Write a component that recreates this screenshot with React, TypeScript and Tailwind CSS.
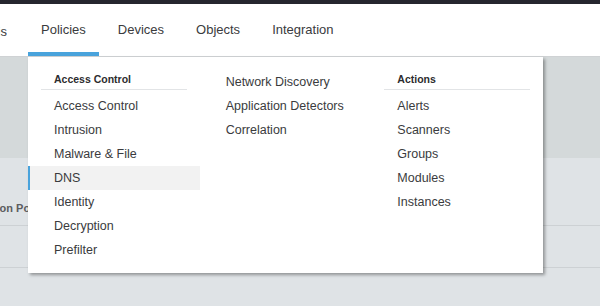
import React from 'react';

const navItems = ['Policies', 'Devices', 'Objects', 'Integration'];

const accessControl = ['Access Control', 'Intrusion', 'Malware & File', 'DNS', 'Identity', 'Decryption', 'Prefilter'];
const discovery = ['Network Discovery', 'Application Detectors', 'Correlation'];
const actions = ['Alerts', 'Scanners', 'Groups', 'Modules', 'Instances'];

function MenuItem({ label, active = false }: { label: string; active?: boolean }) {
  return (
    <div
      className={`h-[24px] flex items-center pl-[24px] pr-[8px] whitespace-nowrap text-[12.5px] text-[#3a3b3d] border-l-[2px] ${
        active ? 'bg-[#f2f2f2] border-[#49a3dc]' : 'border-transparent'
      }`}
    >
      {label}
    </div>
  );
}

function Header({ label }: { label: string }) {
  return (
    <div className="mx-[13px] h-[20px] flex items-center px-[13px] border-b border-[#e2e4e6] text-[10.5px] font-bold text-[#2c2c2e] mb-[4px]">
      {label}
    </div>
  );
}

export default function App() {
  return (
    <div
      className="relative w-full h-[306px] overflow-hidden bg-[#dfe3e6] flex flex-col"
      style={{ fontFamily: '"Liberation Sans", Arial, sans-serif' }}
    >
      {/* Top bar */}
      <div className="h-[4px] bg-[#25262e] shrink-0" />

      {/* Navigation */}
      <nav className="h-[53px] shrink-0 bg-white border-b border-[#cfd2d4] flex items-stretch gap-[6px] text-[13px] text-[#3a3b3d]">
        <div className="w-[7px] flex justify-end items-center pt-[4px] overflow-hidden">
          <span className="shrink-0 whitespace-nowrap">Analysis</span>
        </div>
        {navItems.map((item) => (
          <div
            key={item}
            className={`flex items-center px-[13px] pt-[4px] border-b-4 ${
              item === 'Policies' ? 'border-[#49a3dc] ml-[15px]' : 'border-transparent'
            }`}
          >
            {item}
          </div>
        ))}
      </nav>

      {/* Page behind */}
      <div className="h-[101px] shrink-0 bg-[#d4d9da]" />
      <div className="h-[68px] shrink-0 border-b border-[#cdd1d4] flex items-end pb-[9px] text-[11px] font-bold text-[#5b5d5f]">
        <span className="whitespace-nowrap ml-[-34px]">Intrusion Policy</span>
      </div>
      <div className="h-[42px] shrink-0 border-b border-[#cdd1d4]" />

      {/* Dropdown */}
      <div className="absolute left-[28px] top-[57px] w-[515px] h-[216px] bg-white shadow-[2px_2px_3px_rgba(0,0,0,0.35)] grid grid-cols-3 pt-[13px]">
        <div className="flex flex-col">
          <Header label="Access Control" />
          {accessControl.map((i) => (
            <MenuItem key={i} label={i} active={i === 'DNS'} />
          ))}
        </div>
        <div className="flex flex-col">
          {discovery.map((i) => (
            <MenuItem key={i} label={i} />
          ))}
        </div>
        <div className="flex flex-col">
          <Header label="Actions" />
          {actions.map((i) => (
            <MenuItem key={i} label={i} />
          ))}
        </div>
      </div>
    </div>
  );
}
